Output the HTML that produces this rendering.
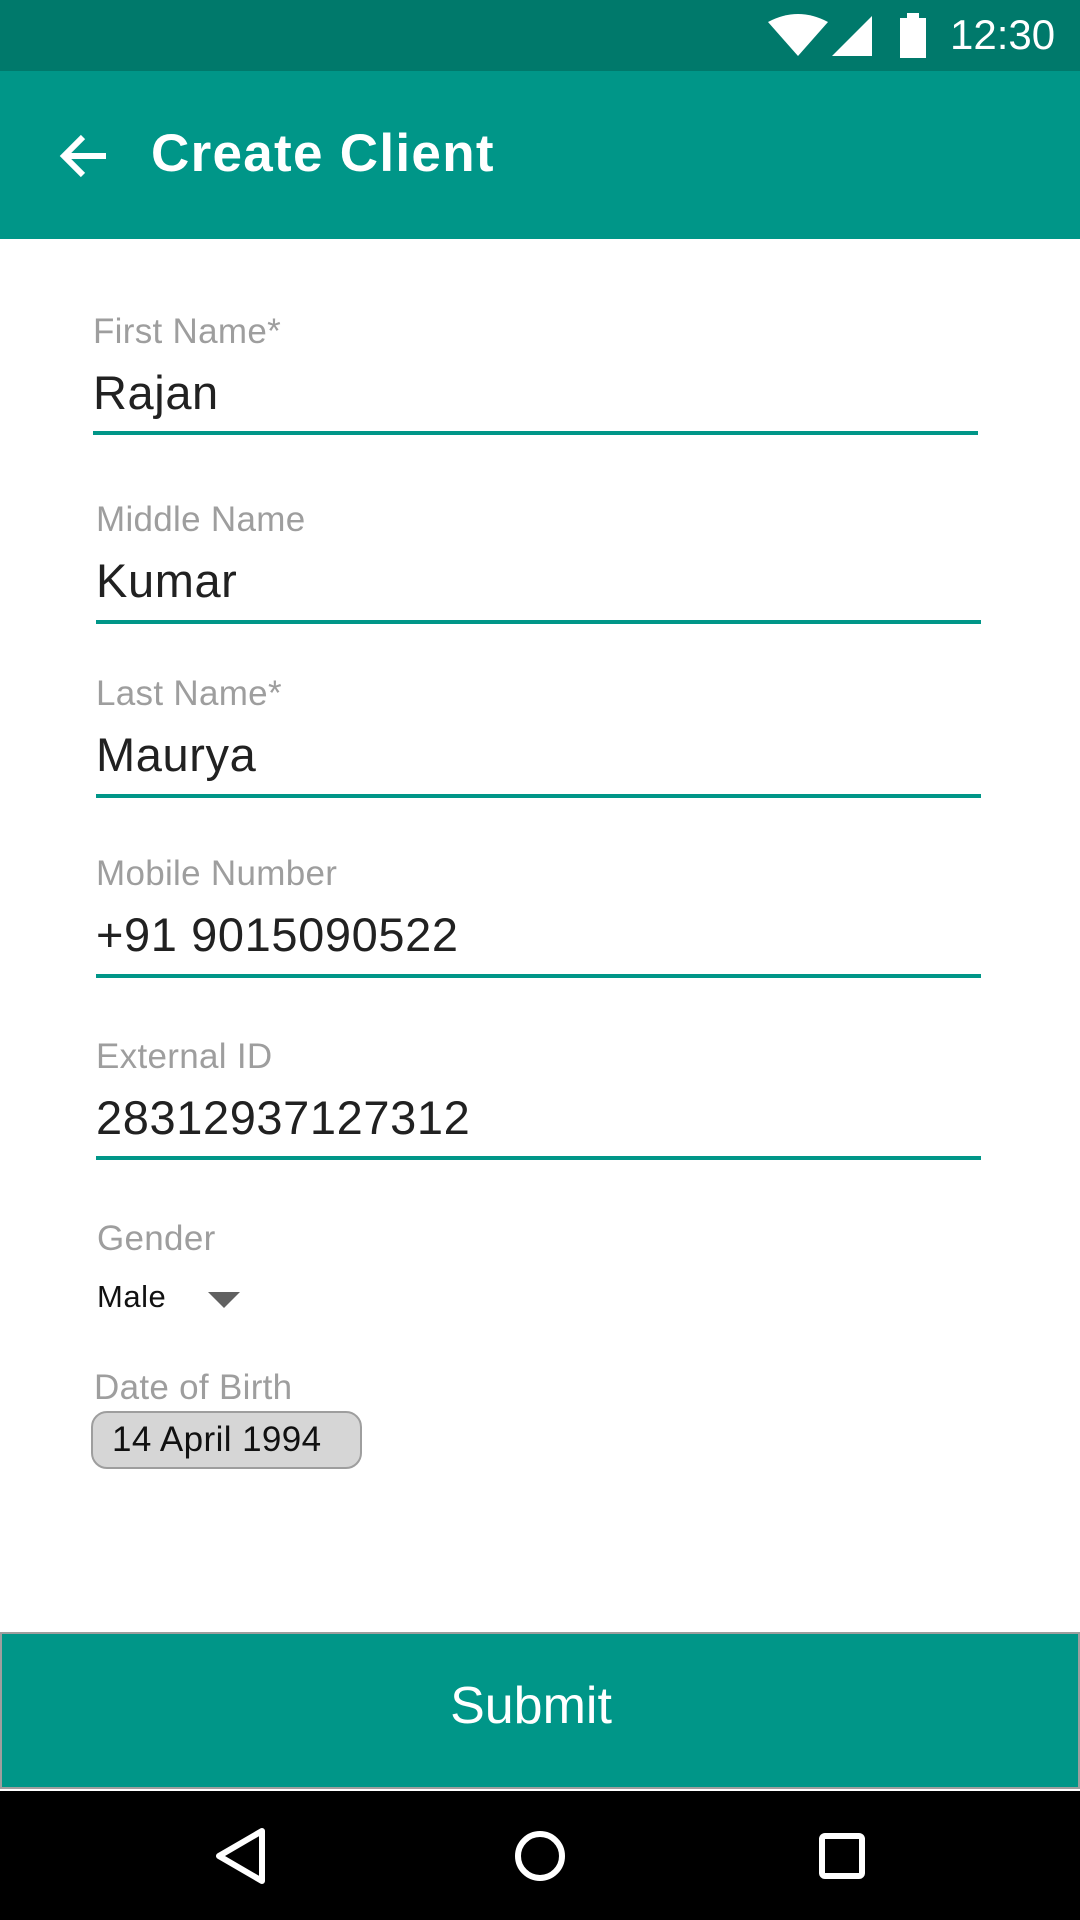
<!DOCTYPE html>
<html><head><meta charset="utf-8"><style>
body{margin:0;width:1080px;height:1920px;position:relative;background:#fff;font-family:"Liberation Sans",sans-serif;overflow:hidden}
.a{position:absolute}
.lbl{position:absolute;font-size:35px;color:#9e9e9e;line-height:1;letter-spacing:0.3px}
.val{position:absolute;font-size:47px;color:#212121;line-height:1;letter-spacing:0.6px}
.ln{position:absolute;height:4px;background:#009688}
</style></head><body>
<div class="a" style="left:0;top:0;width:1080px;height:71px;background:#00796b"></div>
<svg class="a" style="left:768px;top:14px" width="110" height="44" viewBox="0 0 110 44">
<path d="M0 8 Q30 -8 60 8 L30 42 Z" fill="#fff"/>
<path d="M104 2 L104 42 L64 42 Z" fill="#fff"/>
</svg>
<div class="a" style="left:900px;top:18px;width:26px;height:40px;background:#fff"></div>
<div class="a" style="left:907px;top:13px;width:12px;height:6px;background:#fff"></div>
<div class="a" style="left:950px;top:14px;font-size:42px;color:#fff;line-height:1">12:30</div>
<div class="a" style="left:0;top:71px;width:1080px;height:168px;background:#009688"></div>
<svg class="a" style="left:58px;top:133px" width="50" height="46" viewBox="0 0 50 46"><path d="M48 23H6M25 4L6 23L25 42" stroke="#fff" stroke-width="6" fill="none"/></svg>
<div class="a" style="left:151px;top:127px;font-size:53px;color:#fff;line-height:1;font-weight:bold;letter-spacing:1.3px">Create Client</div>

<div class="lbl" style="left:93px;top:314px">First Name*</div>
<div class="val" style="left:93px;top:369px">Rajan</div>
<div class="ln" style="left:93px;top:431px;width:885px"></div>

<div class="lbl" style="left:96px;top:502px">Middle Name</div>
<div class="val" style="left:96px;top:557px">Kumar</div>
<div class="ln" style="left:96px;top:620px;width:885px"></div>

<div class="lbl" style="left:96px;top:676px">Last Name*</div>
<div class="val" style="left:96px;top:731px">Maurya</div>
<div class="ln" style="left:96px;top:794px;width:885px"></div>

<div class="lbl" style="left:96px;top:856px">Mobile Number</div>
<div class="val" style="left:96px;top:911px">+91 9015090522</div>
<div class="ln" style="left:96px;top:974px;width:885px"></div>

<div class="lbl" style="left:96px;top:1039px">External ID</div>
<div class="val" style="left:96px;top:1094px">28312937127312</div>
<div class="ln" style="left:96px;top:1156px;width:885px"></div>

<div class="lbl" style="left:97px;top:1221px">Gender</div>
<div class="a" style="left:97px;top:1281px;font-size:31px;color:#111;line-height:1;letter-spacing:0.5px">Male</div>
<svg class="a" style="left:208px;top:1292px" width="32" height="16"><path d="M0 0H32L16 16Z" fill="#616161"/></svg>

<div class="lbl" style="left:94px;top:1370px">Date of Birth</div>
<div class="a" style="left:91px;top:1411px;width:267px;height:54px;background:#d6d6d6;border:2px solid #9e9e9e;border-radius:16px"></div>
<div class="a" style="left:112px;top:1422px;font-size:35px;color:#111;line-height:1;letter-spacing:0.4px">14 April 1994</div>

<div class="a" style="left:0;top:1632px;width:1076px;height:153px;background:#009688;border:2px solid #9e9e9e"></div>
<div class="a" style="left:0;top:1680px;width:1062px;text-align:center;font-size:52px;color:#fff;line-height:1">Submit</div>

<div class="a" style="left:0;top:1791px;width:1080px;height:129px;background:#000"></div>
<svg class="a" style="left:0;top:1791px" width="1080" height="129">
<path d="M262 40L262 90L219 65Z" fill="none" stroke="#fff" stroke-width="6" stroke-linejoin="round"/>
<circle cx="540" cy="65" r="22" fill="none" stroke="#fff" stroke-width="6"/>
<rect x="822" y="45" width="40" height="40" rx="3" fill="none" stroke="#fff" stroke-width="6"/>
</svg>
</body></html>
